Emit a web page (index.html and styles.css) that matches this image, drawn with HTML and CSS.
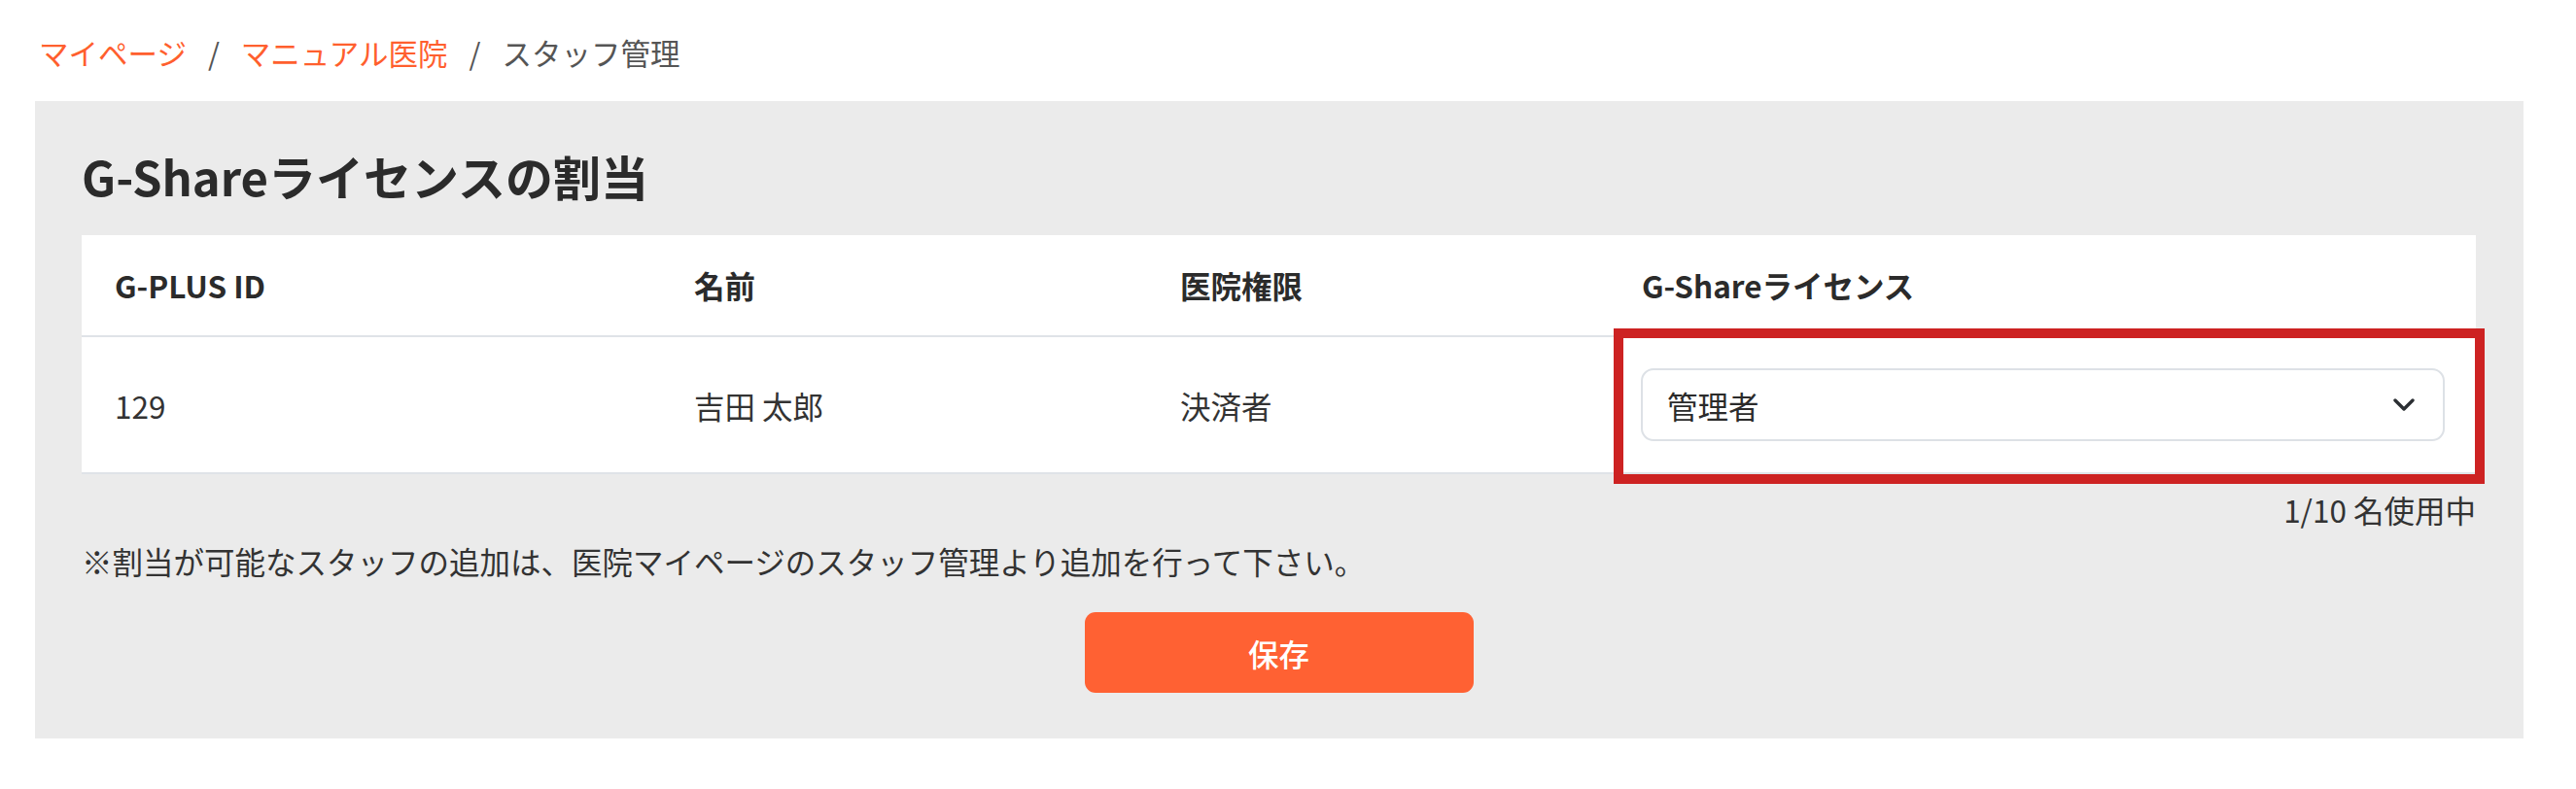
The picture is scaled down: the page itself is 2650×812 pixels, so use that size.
FILE: index.html
```html
<!DOCTYPE html>
<html lang="ja">
<head>
<meta charset="utf-8">
<title>G-Shareライセンスの割当</title>
<link rel="stylesheet" href="styles.css">
</head>
<body>
<nav class="breadcrumb">
  <a class="crumb link" href="#">マイページ</a>
  <span class="sep">/</span>
  <a class="crumb link" href="#">マニュアル医院</a>
  <span class="sep">/</span>
  <span class="crumb current">スタッフ管理</span>
</nav>
<main class="panel">
  <h1 class="title">G-Shareライセンスの割当</h1>
  <div class="table">
    <div class="row head">
      <div class="cell">G-PLUS ID</div>
      <div class="cell">名前</div>
      <div class="cell">医院権限</div>
      <div class="cell">G-Shareライセンス</div>
    </div>
    <div class="row body">
      <div class="cell">129</div>
      <div class="cell">吉田 太郎</div>
      <div class="cell">決済者</div>
      <div class="cell license">
        <div class="select">
          <span class="select-value">管理者</span>
          <svg class="chevron" width="22" height="14" viewBox="0 0 22 14" aria-hidden="true"><path d="M2 2 L11 11 L20 2" fill="none" stroke="#2b2f33" stroke-width="3.4" stroke-linecap="round" stroke-linejoin="round"/></svg>
        </div>
        <div class="highlight"></div>
      </div>
    </div>
  </div>
  <p class="count">1/10 名使用中</p>
  <p class="note">※割当が可能なスタッフの追加は、医院マイページのスタッフ管理より追加を行って下さい。</p>
  <div class="actions">
    <button class="save" type="button">保存</button>
  </div>
</main>
</body>
</html>
```

FILE: styles.css
```css
* { box-sizing: border-box; }

html, body {
  margin: 0;
  padding: 0;
  background: #ffffff;
}

body {
  font-family: "Noto Sans CJK JP", "Noto Sans", sans-serif;
  color: #333333;
  padding-top: 32px;
}

.breadcrumb {
  display: flex;
  align-items: center;
  padding-left: 40px;
  font-size: 30.5px;
  line-height: 45px;
  height: 45px;
}

.crumb.link {
  color: #ff5f2e;
  text-decoration: none;
}

.crumb.current {
  color: #555555;
}

.sep {
  color: #555555;
  margin: 0 22px;
}

.panel {
  margin: 27px 0 0 36px;
  width: 2560px;
  background: #ebebeb;
  padding: 48px 49px 47px 48px;
}

.title {
  margin: 0;
  font-size: 49px;
  line-height: 58px;
  font-weight: 700;
  color: #2b2b2b;
}

.table {
  margin-top: 32px;
  background: #ffffff;
}

.row {
  display: grid;
  grid-template-columns: 596px 500px 475px 1fr;
}

.row.head {
  border-bottom: 2px solid #dfe3e8;
  font-weight: 700;
  color: #2b2b2b;
}

.row.body {
  border-bottom: 2px solid #dfe3e8;
}

.cell {
  font-size: 31.5px;
  line-height: 36px;
  padding: 0 32px 0 34px;
  display: flex;
  align-items: center;
}

.row.head .cell {
  padding-top: 33px;
  padding-bottom: 34px;
}

.row.body .cell {
  height: 139px;
}

.cell.license {
  position: relative;
  padding-left: 33px;
  padding-right: 32px;
}

.select {
  width: 100%;
  height: 75px;
  border: 2px solid #dde1e6;
  border-radius: 13px;
  background: #ffffff;
  display: flex;
  align-items: center;
  justify-content: space-between;
  padding: 0 29px 0 25px;
  color: #2b2b2b;
}

.chevron {
  display: block;
  flex: none;
}

.highlight {
  position: absolute;
  left: 5px;
  right: -9px;
  top: -9px;
  bottom: -12px;
  border: 10px solid #cd2222;
  pointer-events: none;
}

.count {
  margin: 18px 0 0;
  text-align: right;
  font-size: 31.5px;
  line-height: 36px;
  color: #333333;
}

.note {
  margin: 17px 0 0;
  font-size: 31.5px;
  line-height: 36px;
  color: #333333;
}

.actions {
  display: flex;
  justify-content: center;
  margin-top: 35px;
}

.save {
  width: 400px;
  height: 83px;
  border: none;
  border-radius: 11px;
  background: #ff6133;
  color: #ffffff;
  font-family: "Noto Sans CJK JP", "Noto Sans", sans-serif;
  font-size: 31.5px;
  font-weight: 500;
  cursor: pointer;
}
```
